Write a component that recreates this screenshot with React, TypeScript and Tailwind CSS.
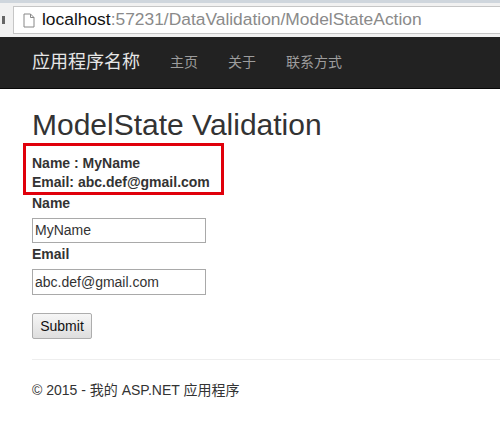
export default function App() {
  return (
    <div className="w-[500px] h-[446px] overflow-hidden bg-white font-['Liberation_Sans','Noto_Sans_CJK_SC',sans-serif] text-[#333]">
      {/* browser chrome */}
      <div className="h-[37px] bg-[#f1f1f1] border-t-[3px] border-[#cfd6dd] flex items-center">
        <div className="w-[13px] h-full flex items-center">
          <div className="w-[3px] h-[8px] bg-[#666] ml-[2px]" />
        </div>
        <div className="flex-1 h-[28px] bg-white border border-[#c6c6c6] border-r-0 flex items-center pl-[9px] gap-[7px]">
          <svg width="12" height="15" viewBox="0 0 12 15">
            <path d="M1 1h6.5L11 4.5V14H1z" fill="#fff" stroke="#888" />
            <path d="M7.5 1v3.5H11" fill="none" stroke="#888" />
          </svg>
          <span className="text-[17.4px] leading-none text-[#8a8a8a]">
            <span className="text-[#111]">localhost</span>:57231/DataValidation/ModelStateAction
          </span>
        </div>
      </div>
      {/* navbar */}
      <div className="h-[52px] bg-[#222] border-b border-[#080808] flex items-center pl-[32px]">
        <span className="text-[18px] text-[#e6e6e6]">应用程序名称</span>
        <span className="ml-[30px] text-[14px] text-[#9d9d9d]">主页</span>
        <span className="ml-[30px] text-[14px] text-[#9d9d9d]">关于</span>
        <span className="ml-[30px] text-[14px] text-[#9d9d9d]">联系方式</span>
      </div>
      {/* body */}
      <div className="pl-[32px]">
        <h2 className="mt-[19px] text-[30px] leading-[33px] text-[#333]">ModelState Validation</h2>
        <div className="ml-[-9px] mt-[2px] w-[201px] h-[52px] border-[3px] border-[#e0000b] pl-[6px] pt-[8px] text-[14px] font-bold leading-[19px]">
          <div>Name : MyName</div>
          <div>Email: abc.def@gmail.com</div>
        </div>
        <div className="text-[14px] font-bold leading-[17px] mt-[0px]">Name</div>
        <div className="mt-[6px] w-[174px] h-[25px] border border-[#a9a9a9] flex items-center px-[2px] text-[14px]">MyName</div>
        <div className="text-[14px] font-bold leading-[17px] mt-[3px]">Email</div>
        <div className="mt-[6px] w-[174px] h-[26px] border border-[#a9a9a9] flex items-center px-[2px] text-[14px]">abc.def@gmail.com</div>
        <div className="mt-[18px] w-[60px] h-[26px] border border-[#adadad] rounded-[2px] bg-gradient-to-b from-[#f6f6f6] to-[#dedede] flex items-center justify-center text-[14px] text-[#111]">Submit</div>
        <div className="mt-[20px] h-px bg-[#eee]" />
        <div className="mt-[20px] text-[14px] text-[#333]">© 2015 - 我的 ASP.NET 应用程序</div>
      </div>
    </div>
  );
}
